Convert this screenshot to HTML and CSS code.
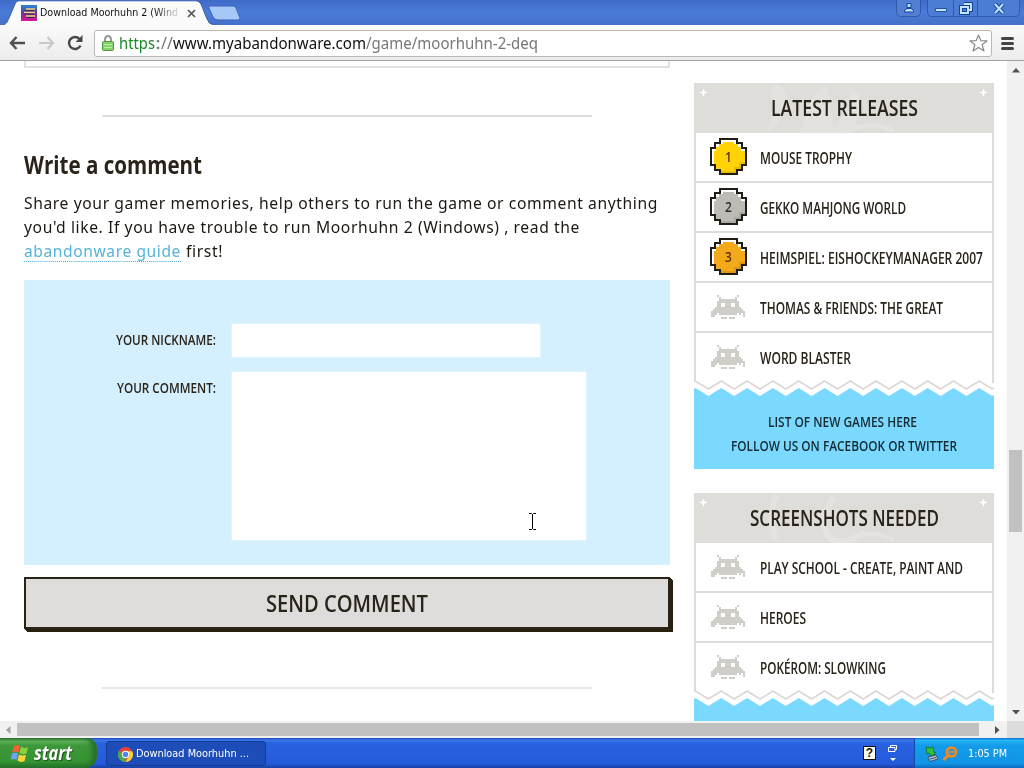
FILE: index.html
```html
<!DOCTYPE html>
<html lang="en">
<head>
<meta charset="utf-8">
<title>Download Moorhuhn 2 (Windows)</title>
<link rel="stylesheet" href="styles.css">
</head>
<body>
<svg class="defs" aria-hidden="true">
  <symbol id="invader" viewBox="0 0 17 12"><path shape-rendering="crispEdges" fill="#d0cec8" d="M3 0h1v1h-1zM13 0h1v1h-1zM4 1h1v1h-1zM12 1h1v1h-1zM4 2h9v1h-9zM3 3h11v1h-11zM3 4h2v2h-2zM7 4h3v2h-3zM12 4h2v2h-2zM2 6h13v1h-13zM1 7h15v1h-15zM0 8h2v3h-1v-2h-1zM0 8h1v3h-1zM2 8h1v2h-1zM3 8h11v1h-11zM4 9h9v1h-9zM14 8h1v2h-1zM15 8h2v3h-1v-2h-1zM5 11h3v1h-3zM9 11h3v1h-3z"/></symbol>
  <symbol id="medal" viewBox="0 0 37 37"><path fill="#211c16" d="M9 0H28V4H33V9H37V28H33V33H28V37H9V33H4V28H0V9H4V4H9z"/><path fill="#fff" d="M11 2H26V6H31V11H35V26H31V31H26V35H11V31H6V26H2V11H6V6H11z"/><path fill="currentColor" d="M13 4H24V6H28V9H31V13H35V26H31V31H26V35H11V31H6V26H4V13H6V9H9V6H13z"/><path fill="#000" opacity=".1" d="M33 24H35V26H31V31H26V35H11V33H24V29H29V24z"/></symbol>
  <symbol id="spark" viewBox="0 0 7 7"><path fill="#fff" d="M3 0h1l.5 2.5L7 3v1l-2.500.500L4 7H3l-.5-2.500L0 4V3l2.500-.5z"/></symbol>
  <symbol id="wave" viewBox="0 0 300 17"><path fill="#fff" d="M0 2.500L1.500 1L14.400 9L27.300 1L40.200 9L53.100 1L66 9L78.900 1L91.800 9L104.700 1L117.600 9L130.500 1L143.400 9L156.300 1L169.200 9L182.100 1L195 9L207.900 1L220.800 9L233.700 1L246.600 9L259.500 1L272.400 9L285.300 1L298.200 9L300 8V17H0z"/><path fill="none" stroke="#dcd6d4" stroke-width="1.500" d="M0 1L1.500 1L14.400 9L27.300 1L40.200 9L53.100 1L66 9L78.900 1L91.800 9L104.700 1L117.600 9L130.500 1L143.400 9L156.300 1L169.200 9L182.100 1L195 9L207.900 1L220.800 9L233.700 1L246.600 9L259.500 1L272.400 9L285.300 1L298.200 9L300 8"/><path fill="#7bd8ff" d="M0 9L1.500 8L14.400 16L27.300 8L40.200 16L53.100 8L66 16L78.900 8L91.800 16L104.700 8L117.600 16L130.500 8L143.400 16L156.300 8L169.200 16L182.100 8L195 16L207.900 8L220.800 16L233.700 8L246.600 16L259.500 8L272.400 16L285.300 8L298.200 16L300 15V17H0z"/></symbol>
</svg>
<div class="screen">
  <header class="titlebar">
    <svg class="tabs" width="245" height="25" viewBox="0 0 245 25"><path fill="#fbfbfb" stroke="#3a5fae" d="M0 25C7 25 7 22 9 18L15 4Q16 .8 19 .8H196Q199 .8 201 4L207 19Q209 24.500 213 24.500V26H0z"/><path fill="#a5c8f7" stroke="#3e63b5" d="M210 6H233Q235 6 236 8L240 18Q240 20 238 20H218Q215 20 213 17L209 8Q208 6 210 6z"/></svg>
    <div class="tab">
      <svg width="16" height="16" viewBox="0 0 16 16"><defs><linearGradient id="fav" x2="0" y2="1"><stop stop-color="#2488d8"/><stop offset=".5" stop-color="#653a9d"/><stop offset="1" stop-color="#df1495"/></linearGradient></defs><path fill="url(#fav)" d="M0 0h16v16H0z"/><path stroke="#f5d27b" stroke-width="1.600" d="M5 4h9M3 7.500h11M5 11h9"/><path stroke="#402651" d="M4 5.500h9M3 9h10M5 12.500h8"/></svg>
      <span class="tab-title"><span data-width="138">Download Moorhuhn 2 (Wind</span></span>
      <svg width="9" height="9" viewBox="0 0 9 9"><path stroke="#555" stroke-width="1.700" d="M1 1l7 7M8 1L1 8"/></svg>
    </div>
    <div class="controls">
      <span class="ctl user"><svg width="12" height="10" viewBox="0 0 12 10"><path fill="#b9dcff" stroke="#17449a" d="M4 .5h4v4H4zM1.500 9V7L4 5.500h4L10.500 7v2z"/></svg></span>
      <span class="ctl-group"><span class="ctl min"><svg width="12" height="5" viewBox="0 0 12 5"><path fill="#c5e2ff" stroke="#2152a5" d="M.5.5h11v3H.5z"/></svg></span><span class="ctl mid"><svg width="14" height="13" viewBox="0 0 14 13"><path fill="none" stroke="#12439b" stroke-width="4" d="M5 2h7v6H9M2 5h7v6H2z"/><path fill="none" stroke="#c5e2ff" stroke-width="2" d="M5 2h7v6H9M2 5h7v6H2z"/></svg></span><span class="ctl close"><svg width="12" height="11" viewBox="0 0 12 11"><path stroke="#12439b" stroke-width="4" d="M2 1l8 9M10 1L2 10"/><path stroke="#b9e0ff" stroke-width="2.200" d="M2 1l8 9M10 1L2 10"/></svg></span></span>
    </div>
  </header>
  <nav class="toolbar">
    <svg width="17" height="14" viewBox="0 0 17 14"><path fill="none" stroke="#505050" stroke-width="2.400" d="M16 7H2M7.500 1L2 7l5.500 6"/></svg>
    <svg width="17" height="14" viewBox="0 0 17 14"><path fill="none" stroke="#c9c9c9" stroke-width="2.200" d="M1 7h14M9.500 1L15 7l-5.500 6"/></svg>
    <svg width="17" height="16" viewBox="0 0 17 16"><path fill="none" stroke="#484848" stroke-width="2.400" d="M13.500 10.500A6 6 0 1 1 12.500 4"/><path fill="#484848" d="M15.500 0v7H8.500z"/></svg>
    <div class="omnibox">
      <svg class="lock" width="12" height="16" viewBox="0 0 12 16"><path fill="none" stroke="#919b91" stroke-width="2" d="M3 8V4.500a3 3.500 0 0 1 6 0V8"/><rect x=".5" y="6.500" width="11" height="9" rx="1" fill="#83d26b" stroke="#529842"/><path stroke="#b5efa3" d="M2 9.500h8M2 12.500h8"/></svg>
      <span class="url"><span class="secure" data-width="36">https</span><span class="dim" data-width="6">:</span><span class="dim" data-width="12">//</span><span class="host" data-width="193">www.myabandonware.com</span><span class="dim" data-width="172">/game/moorhuhn-2-deq</span></span>
      <svg class="star" width="19" height="18" viewBox="0 0 19 18"><path fill="#fff" stroke="#888" stroke-width="1.200" stroke-linejoin="round" d="M9.500 1l2.300 5.600 6.200.3-4.900 3.900L15 17l-5.500-3.600L4 17l1.900-6.200L1 6.900l6.200-.3z"/></svg>
    </div>
    <svg width="13" height="13" viewBox="0 0 13 13"><path stroke="#454545" stroke-width="3" stroke-linecap="round" d="M1.500 1.500h10M1.500 6.500h10M1.500 11.500h10"/></svg>
  </nav>
  <div class="viewport">
    <div class="page">
      <main class="content">
        <div class="prev-box"></div>
        <div class="rule"></div>
        <h2><span data-width="178">Write a comment</span></h2>
        <p><span data-width="634">Share your gamer memories, help others to run the game or comment anything</span><br><span data-width="556">you'd like. If you have trouble to run Moorhuhn 2 (Windows) , read the</span><br><a data-width="157">abandonware guide</a><i class="gap"></i><span data-width="37">first!</span></p>
        <form class="comment">
          <label><span data-width="100">YOUR NICKNAME:</span></label><div class="field"></div>
          <label><span data-width="99">YOUR COMMENT:</span></label><div class="field area"></div>
        </form>
        <div class="send"><span data-width="162">SEND COMMENT</span></div>
        <div class="rule"></div>
      </main>
      <aside class="sidebar">
        <section class="card">
          <h3><svg class="deco" width="200" height="50"><path fill="#e4e2de" d="M76 5Q90-5 93 18Q88 42 72 50Q82 28 76 5M105 50Q117 5 133 3L140 45Q160 20 155 5L166 12Q165 50 150 50z"/><path fill="none" stroke="#e5e3e0" stroke-width="4" d="M145 52Q175 35 200 48"/></svg><svg class="spark" width="7" height="7"><use href="#spark"/></svg><span data-width="147">LATEST RELEASES</span><svg class="spark end" width="7" height="7"><use href="#spark"/></svg></h3>
          <ul>
            <li><i class="medal gold"><svg width="37" height="37"><use href="#medal"/></svg><b>1</b></i><span data-width="92">MOUSE TROPHY</span></li>
            <li><i class="medal silver"><svg width="37" height="37"><use href="#medal"/></svg><b>2</b></i><span data-width="146">GEKKO MAHJONG WORLD</span></li>
            <li><i class="medal bronze"><svg width="37" height="37"><use href="#medal"/></svg><b>3</b></i><span data-width="223">HEIMSPIEL: EISHOCKEYMANAGER 2007</span></li>
            <li><svg class="invader" width="34" height="24"><use href="#invader"/></svg><span data-width="183">THOMAS &amp; FRIENDS: THE GREAT</span></li>
            <li><svg class="invader" width="34" height="24"><use href="#invader"/></svg><span data-width="91">WORD BLASTER</span></li>
          </ul>
          <svg class="wave" width="300" height="17"><use href="#wave"/></svg>
          <div class="more"><span class="first" data-width="149">LIST OF NEW GAMES HERE</span><br><span data-width="226">FOLLOW US ON FACEBOOK OR TWITTER</span></div>
        </section>
        <section class="card">
          <h3><svg class="deco" width="200" height="50"><path fill="none" stroke="#e5e3e0" stroke-width="6" d="M82 2Q74 20 81 46M140 4Q125 25 134 43Q145 55 170 40"/><path fill="none" stroke="#e5e3e0" stroke-width="4" d="M155 50Q175 33 200 48"/></svg><svg class="spark" width="7" height="7"><use href="#spark"/></svg><span data-width="189">SCREENSHOTS NEEDED</span><svg class="spark end" width="7" height="7"><use href="#spark"/></svg></h3>
          <ul>
            <li><svg class="invader" width="34" height="24"><use href="#invader"/></svg><span data-width="203">PLAY SCHOOL - CREATE, PAINT AND</span></li>
            <li><svg class="invader" width="34" height="24"><use href="#invader"/></svg><span data-width="46">HEROES</span></li>
            <li><svg class="invader" width="34" height="24"><use href="#invader"/></svg><span data-width="126">POKÉROM: SLOWKING</span></li>
          </ul>
          <svg class="wave" width="300" height="17"><use href="#wave"/></svg>
          <div class="more"></div>
        </section>
      </aside>
      <svg class="cursor" width="9" height="17" viewBox="0 0 9 17"><path fill="none" stroke="#000" d="M1 .5h2.500L4.500 1.500 5.500.5H8M4.500 1v15M1 16.500h2.500l1-1 1 1H8"/></svg>
    </div>
    <div class="vscroll"><svg width="8" height="5" viewBox="0 0 8 5"><path fill="#505050" d="M0 4.500L4 0l4 4.500z"/></svg><div class="vtrack"><div class="vthumb"></div></div><svg width="8" height="5" viewBox="0 0 8 5"><path fill="#505050" d="M0 0h8L4 4.500z"/></svg></div>
  </div>
  <div class="hscroll"><svg width="5" height="8" viewBox="0 0 5 8"><path fill="#a2a2a2" d="M4.500 0v8L0 4z"/></svg><div class="hthumb"></div><svg class="right" width="5" height="8" viewBox="0 0 5 8"><path fill="#505050" d="M0 0v8l4.500-4z"/></svg><div class="corner"></div></div>
  <footer class="taskbar">
    <div class="start"><svg width="19" height="19" viewBox="0 0 19 19"><path fill="#ef6335" d="M4 2Q7 0 10 2L8.500 8.500Q5.500 7 2 8.500z"/><path fill="#8bd13d" d="M11 2.500Q14 5 18 3L16.500 9.500Q13 11 9.500 9z"/><path fill="#6fa3fa" d="M2 9.500Q5 8 8 9.500L6.500 16Q3 14 .5 16z"/><path fill="#ffd43a" d="M9 10.500Q12 12 16 11L14.500 17Q11 19 7.500 16.500z"/></svg><span data-width="38">start</span></div>
    <div class="task"><svg width="15" height="15" viewBox="0 0 16 16"><circle cx="8" cy="8" r="8" fill="#e3473a"/><path fill="#48a852" d="M1 4L6.500 9 8 16A8 8 0 0 1 1 4"/><path fill="#f9d13b" d="M8 4.500h7.200A8 8 0 0 1 8 16l3.500-6z"/><circle cx="8" cy="8" r="3.900" fill="#fff"/><circle cx="8" cy="8" r="2.900" fill="#4b86e8"/></svg><span data-width="113">Download Moorhuhn ...</span></div>
    <div class="lang"><span class="help">?</span><svg width="10" height="18" viewBox="0 0 10 18"><path fill="none" stroke="#fff" d="M2.500 3V1.500h6v4H7M.5 3.500H7v4H.5z"/><path fill="#fff" d="M2 14h6l-3 3z"/></svg></div>
    <div class="tray"><svg width="14" height="16" viewBox="0 0 14 16"><path fill="#b6c4d0" stroke="#39516c" d="M3 11l8-2 2 4-8 2.500z"/><path stroke="#39516c" d="M5 13l6-1.500"/><path fill="#2fc23e" stroke="#197a30" d="M1 1l4 1 3-1 1 5 2 1-5 3-2-3-2 1z"/></svg><svg width="16" height="16" viewBox="0 0 16 16"><circle cx="9.500" cy="6" r="4.600" fill="#3c92c9" stroke="#f28a1d" stroke-width="2.500"/><path stroke="#f28a1d" stroke-width="3" d="M6 9.500L1.500 14"/><path stroke="#f28a1d" stroke-width="1.500" d="M7 6h5"/></svg><span data-width="39">1:05 PM</span></div>
  </footer>
</div>
<script src="labels.js"></script>
</body>
</html>
```
FILE: styles.css
```css
*{box-sizing:border-box}
body{margin:0;overflow:hidden;color:#29231a;font-family:"Open Sans","Noto Sans",sans-serif}
svg{display:block;flex:none}
.defs{position:absolute;width:0;height:0}
[data-width]{display:inline-block;white-space:nowrap;transform-origin:0 50%;flex:none}
.screen{width:1024px;height:768px;display:flex;flex-direction:column;overflow:hidden;background:#fff}
.titlebar{height:25px;flex:none;position:relative;display:flex;justify-content:space-between;background:linear-gradient(#3e6bc8,#4b7bd6 50%,#4270cb)}
.tabs{position:absolute;left:0;top:0}
.tab{position:relative;display:flex;align-items:center;height:25px;padding:1px 0 0 21px}
.tab-title{width:139px;margin:0 8px 0 3px;font:11px/16px "DejaVu Sans Condensed","DejaVu Sans",sans-serif;color:#111;-webkit-mask:linear-gradient(90deg,#000 115px,transparent 142px);mask:linear-gradient(90deg,#000 115px,transparent 142px)}
.controls{display:flex;gap:6px;height:17px;padding-right:4px}
.ctl{display:flex;align-items:center;justify-content:center;height:17px}
.user{width:25px;border:1px solid #2f59ac;border-top:0;border-radius:0 0 5px 5px;background:#527fd4}
.ctl-group{display:flex;border:1px solid #2f59ac;border-top:0;border-radius:0 0 5px 5px;background:#4d7cd4}
.min{width:25px;padding-top:4px}
.mid{width:25px;border:solid #2f59ac;border-width:0 1px}
.close{width:41px}
.toolbar{height:36px;flex:none;display:flex;align-items:center;padding:1px 10px 0 9px;gap:12px;background:linear-gradient(#fafafa,#ececec);border-bottom:1px solid #a3a3a3}
.omnibox{flex:1;height:27px;margin-left:-2px;margin-right:-3px;border:1px solid #bcb5b0;border-radius:3px;background:#fff;display:flex;align-items:center;padding:0 3px 0 7px}
.url{flex:1;display:flex;margin-left:5px;font:16px/24px "Noto Sans",sans-serif;color:#111}
.secure{color:#188a24}
.dim{color:#777}
.viewport{height:660px;flex:none;display:flex;overflow:hidden}
.page{width:1007px;position:relative;display:flex;gap:24px;padding-left:24px;align-items:flex-start}
.content{width:646px}
.prev-box{height:7px;border:2px solid #e2e2e2;border-top:0}
.rule{height:2px;width:490px;margin:47px 0 0 78px;background:#dedede}
h2{margin:31px 0 0;font-size:25px;line-height:32px;font-weight:700}
p{margin:11px 0 0;font:16px/24px "Noto Sans",sans-serif;letter-spacing:.6px;height:72px;color:#1c1913}
p a{color:#55b4d8;border-bottom:1px dotted #42a8d0;line-height:20px}
.gap{display:inline-block;width:5px}
.comment{margin-top:17px;height:285px;background:#d4f0fe;display:grid;grid-template-columns:192px 1fr;grid-template-rows:33px 168px;gap:15px 16px;padding-top:44px}
label{text-align:right;font-size:14.500px;line-height:32px;font-weight:600;white-space:nowrap}
.field{width:308px;background:#fff;box-shadow:0 0 2px #eefaff}
.area{width:354px}
.send{margin-top:12px;height:52px;width:646px;border:2px solid #29231a;background:#dfdddc;box-shadow:inset 0 0 2px #eadfca,1px 1px #29200f,2px 2px #29200f,3px 3px #29200f;text-align:center;font-size:23px;line-height:48px;font-weight:600}
.send+.rule{margin-top:58px;background:#e7e7e7}
.sidebar{width:300px;padding-top:22px}
.card{margin-bottom:24px}
h3{position:relative;margin:0;height:50px;padding:0 8px;display:flex;justify-content:center;background:#dfddd9;font-size:21px;line-height:50px;font-weight:600}
.deco{position:absolute;left:0;top:0;overflow:hidden}
.spark{position:absolute;left:6px;top:6px}
.end{left:286px}
h3 span{position:relative}
ul{list-style:none;margin:0;padding:0;border:solid #dfdddb;border-width:0 2px}
li{display:flex;align-items:center;height:50px;border-bottom:2px solid #dfdddb;font-size:15.500px;line-height:20px;font-weight:600;padding:1px 0 0 64px;position:relative}
li:last-child{border-bottom-color:transparent}
.medal{position:absolute;left:14px;top:5px;width:37px;height:37px}
.medal svg{position:absolute}
.medal b{position:absolute;left:0;width:37px;top:9px;text-align:center;font:600 14px/20px "Open Sans",sans-serif;transform:scaleX(.85)}
.gold{color:#ffd306}.silver{color:#bdbbb6}.bronze{color:#f3a919}
.gold b,.bronze b{color:#5d3008}.silver b{color:#302b26}
.invader{position:absolute;left:15px;top:12px}
.wave{position:relative;margin-top:-3px}
.more{height:72px;background:#7bd8ff;text-align:center;font-size:15px;line-height:24px;font-weight:600;padding-top:12px;color:#132a33}
.first{position:relative;left:-2px}
.cursor{position:absolute;left:528px;top:452px}
.vscroll{width:17px;background:#f1f1f1;display:flex;flex-direction:column;align-items:center;padding:7px 0 6px}
.vtrack{flex:1;width:13px;padding-top:377px}
.vthumb{height:82px;background:#c1c1c1}
.hscroll{height:17px;flex:none;background:#f1f1f1;display:flex;align-items:center;padding-left:6px}
.hthumb{width:962px;height:13px;margin-left:6px;background:#c1c1c1}
.right{margin:0 7px 0 16px}
.corner{width:17px;height:17px;background:#dcdcdc}
.taskbar{height:30px;flex:none;display:flex;align-items:center;background:linear-gradient(#1c45b5,#3a78ed 7%,#2962df 18%,#245bdb 85%,#1941a5);color:#fff}
.start{width:97px;height:30px;display:flex;align-items:center;padding-left:10px;gap:5px;border-radius:0 10px 12px 0;background:linear-gradient(#2d7432,#62b45e 10%,#3d983b 25%,#349332 80%,#23702a);box-shadow:inset -5px 0 5px #27712b;font:italic 700 19px/26px "Open Sans",sans-serif;text-shadow:1px 1px 1px #244d20}
.task{width:160px;height:25px;margin-left:9px;padding:2px 0 0 11px;display:flex;align-items:center;gap:3px;border:1px solid #153c94;border-radius:3px;background:#1d4db8;font:11px/18px "DejaVu Sans",sans-serif}
.lang{margin-left:auto;display:flex;align-items:center;gap:12px;margin-right:16px}
.help{width:13px;height:14px;background:#fffff1;border:1px solid #111;color:#111;font:700 12px/12px "Liberation Sans",sans-serif;text-align:center}
.tray{width:110px;height:30px;padding:1px 0 0 10px;display:flex;align-items:center;gap:3px;border-left:1px solid #0e4aa8;background:linear-gradient(#0d72d0,#25b4f5 8%,#139ce9 25%,#1194e6 85%,#0c69bc);font:11px/18px "DejaVu Sans",sans-serif}
.tray span{margin-left:7px}
```
FILE: labels.js
```js
document.querySelectorAll('[data-width]').forEach(function (el) {
  var natural = el.getBoundingClientRect().width;
  var target = Number(el.dataset.width);
  el.style.transform = 'scaleX(' + target / natural + ')';
  el.style.marginRight = target - natural + 'px';
});
```
